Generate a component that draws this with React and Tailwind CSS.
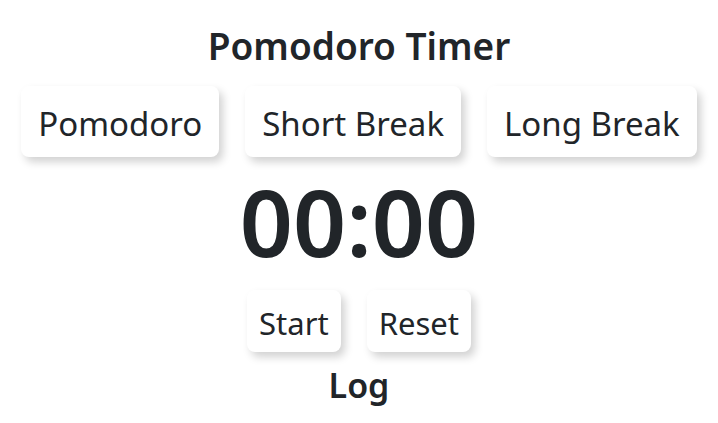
export default function App() {
  const modes = ['Pomodoro', 'Short Break', 'Long Break'];
  const btn =
    'bg-white rounded-lg shadow-[4px_5px_8px_rgba(0,0,0,0.18)] text-[#212529]';

  return (
    <div
      className="min-h-screen bg-white flex flex-col items-center text-[#212529]"
      style={{ fontFamily: '"Noto Sans", "Open Sans", sans-serif' }}
    >
      <h1 className="mt-[22px] text-[37px] leading-[48px] font-semibold">Pomodoro Timer</h1>

      <div className="mt-[16px] flex gap-[26px]">
        {modes.map((m) => (
          <button key={m} className={`${btn} h-[71px] px-[17px] pt-[4px] text-[33px]`}>
            {m}
          </button>
        ))}
      </div>

      <div className="mt-[4px] text-[93px] leading-[120px] font-semibold">00:00</div>

      <div className="mt-[9px] flex gap-[26px]">
        <button className={`${btn} h-[62px] px-[12px] pt-[4px] text-[31px]`}>Start</button>
        <button className={`${btn} h-[62px] px-[12px] pt-[4px] text-[31px]`}>Reset</button>
      </div>

      <h2 className="mt-[11px] text-[34px] leading-[44px] font-semibold">Log</h2>
    </div>
  );
}
